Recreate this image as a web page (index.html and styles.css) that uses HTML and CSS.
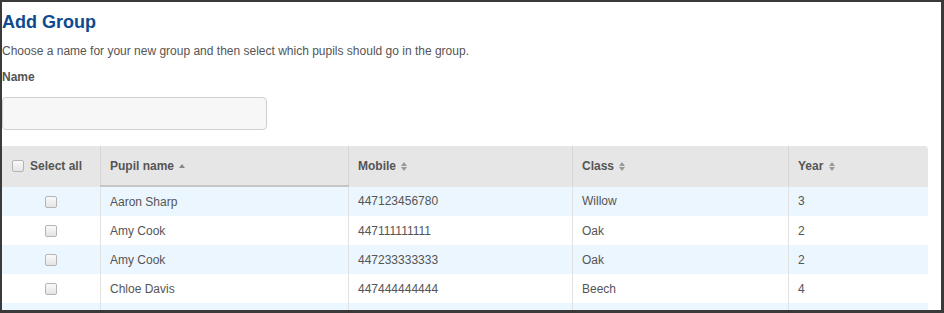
FILE: index.html
```html
<!DOCTYPE html>
<html lang="en">
<head>
    <meta charset="UTF-8">
    <meta name="viewport" content="width=device-width, initial-scale=1.0">
    <link rel="stylesheet" href="styles.css">
</head>
<body>
<div class="frame">
    <h1>Add Group</h1>
    <p class="intro">Choose a name for your new group and then select which pupils should go in the group.</p>
    <label class="field-label" for="groupName">Name</label>
    <input type="text" id="groupName" class="name-input">

    <table class="pupils">
        <thead>
            <tr>
                <th class="col-check"><span class="box"></span>Select all</th>
                <th class="col-name sorted">Pupil name <span class="sort-up"></span></th>
                <th class="col-mobile">Mobile <span class="sort-both"></span></th>
                <th class="col-class">Class <span class="sort-both"></span></th>
                <th class="col-year">Year <span class="sort-both"></span></th>
            </tr>
        </thead>
        <tbody>
            <tr>
                <td class="cell-check"><span class="box"></span></td>
                <td>Aaron Sharp</td>
                <td>447123456780</td>
                <td>Willow</td>
                <td>3</td>
            </tr>
            <tr>
                <td class="cell-check"><span class="box"></span></td>
                <td>Amy Cook</td>
                <td>447111111111</td>
                <td>Oak</td>
                <td>2</td>
            </tr>
            <tr>
                <td class="cell-check"><span class="box"></span></td>
                <td>Amy Cook</td>
                <td>447233333333</td>
                <td>Oak</td>
                <td>2</td>
            </tr>
            <tr>
                <td class="cell-check"><span class="box"></span></td>
                <td>Chloe Davis</td>
                <td>447444444444</td>
                <td>Beech</td>
                <td>4</td>
            </tr>
            <tr class="peek">
                <td></td>
                <td></td>
                <td></td>
                <td></td>
                <td></td>
            </tr>
        </tbody>
    </table>
</div>
</body>
</html>
```

FILE: styles.css
```css
html, body {
    margin: 0;
    padding: 0;
    background: #fff;
}

body {
    font-family: "Liberation Sans", Arial, sans-serif;
    color: #555;
}

.frame {
    box-sizing: border-box;
    width: 944px;
    height: 313px;
    overflow: hidden;
    border: 2px solid #3a3a3a;
    border-right-width: 3px;
    border-bottom-width: 3px;
}

h1 {
    margin: 10px 0 0;
    font-size: 18px;
    line-height: 20px;
    font-weight: bold;
    color: #0d4a8e;
}

.intro {
    margin: 11px 0 0;
    font-size: 12px;
    line-height: 17px;
}

.field-label {
    display: block;
    margin-top: 9px;
    font-size: 12px;
    line-height: 17px;
    font-weight: bold;
}

.name-input {
    display: block;
    box-sizing: border-box;
    margin-top: 11px;
    width: 265px;
    height: 33px;
    border: 1px solid #cfcfcf;
    border-radius: 4px;
    background: #f7f7f7;
}

.pupils {
    margin-top: 16px;
    width: 926px;
    border-collapse: collapse;
    font-size: 12px;
}

.pupils th {
    height: 39px;
    padding: 0 9px;
    background: #e6e6e6;
    text-align: left;
    font-weight: bold;
    color: #555;
    border-left: 1px solid #d6d6d6;
    border-bottom: 1px solid #e6e6e6;
    white-space: nowrap;
}

.pupils th:first-child {
    border-left: none;
}

.pupils th:last-child {
    border-top-right-radius: 4px;
}

.pupils th.sorted {
    border-bottom: 2px solid #c6c6c6;
}

.col-check { width: 80px; }
.col-name { width: 229px; }
.col-mobile { width: 205px; }
.col-class { width: 197px; }

.pupils td {
    height: 29px;
    padding: 0 9px;
    border-left: 1px solid #e2e2e2;
    color: #555;
}

.pupils td:first-child {
    border-left: none;
}

.pupils tbody tr:nth-child(odd) td {
    background: #ebf6fe;
}

.cell-check {
    text-align: center;
}

.box {
    display: inline-block;
    box-sizing: border-box;
    width: 12px;
    height: 12px;
    border: 1px solid #b5b5b5;
    border-radius: 2px;
    background: linear-gradient(#fafafa, #e4e4e4);
    vertical-align: middle;
}

.col-check .box {
    margin: -2px 6px 0 1px;
}

.sort-up,
.sort-both {
    display: inline-block;
    position: relative;
    width: 7px;
    height: 9px;
    margin-left: 2px;
    vertical-align: middle;
}

.sort-up::before,
.sort-both::before,
.sort-both::after {
    content: "";
    position: absolute;
    left: 0;
    border-left: 3.5px solid transparent;
    border-right: 3.5px solid transparent;
}

.sort-up::before {
    top: 2px;
    border-bottom: 4px solid #888;
}

.sort-both::before {
    top: 0;
    border-bottom: 4px solid #999;
}

.sort-both::after {
    top: 5px;
    border-top: 4px solid #999;
}
```
